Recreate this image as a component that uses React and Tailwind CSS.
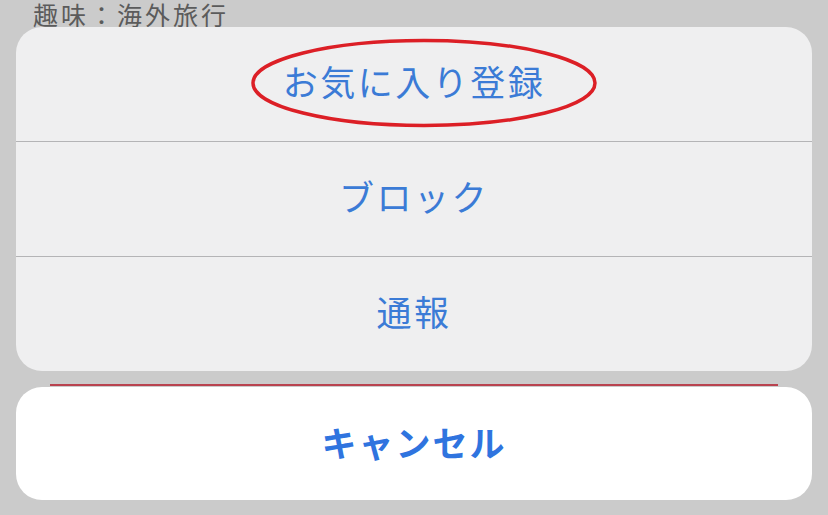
import React from 'react';

const jp = { fontFamily: '"Noto Sans CJK JP", "Noto Sans", sans-serif' };

const ActionRow = ({ label, children }) => (
  <div className="relative flex h-[114px] items-center justify-center pb-[5px]">
    <span className="text-[35px] tracking-[2.5px] text-[#3b7bd6]" style={jp}>{label}</span>
    {children}
  </div>
);

const App = () => {
  return (
    <div className="flex h-[515px] w-[828px] flex-col overflow-hidden bg-[#cbcbcb]" style={jp}>
      {/* profile text behind the sheet */}
      <div className="h-[27px] pl-[33px] pt-[2px]">
        <p className="text-[25px] leading-[25px] tracking-[3px] text-[#5b5b5b]">趣味：海外旅行</p>
      </div>

      {/* action sheet */}
      <div className="relative mx-[16px] flex flex-col overflow-hidden rounded-[26px] bg-[#efeff0]">
        <ActionRow label="お気に入り登録">
          <svg className="pointer-events-none absolute left-[234px] top-[10px]" width="348" height="92" viewBox="0 0 348 92">
            <ellipse cx="174" cy="46" rx="171" ry="42.5" fill="none" stroke="#dc1f26" strokeWidth="3.5" />
          </svg>
        </ActionRow>
        <div className="h-px bg-[#b4b4b6]" />
        <ActionRow label="ブロック" />
        <div className="h-px bg-[#b4b4b6]" />
        <ActionRow label="通報" />
      </div>

      {/* thin red edge peeking between sheets */}
      <div className="mx-[50px] mt-[13px] h-[2px] bg-[#b9434f]" />

      {/* cancel */}
      <div className="mx-[16px] mt-px flex h-[113px] items-center justify-center rounded-[26px] bg-white pb-[3px]">
        <span className="text-[35px] font-bold tracking-[2px] text-[#2f74df]">キャンセル</span>
      </div>
    </div>
  );
};

export default App;
